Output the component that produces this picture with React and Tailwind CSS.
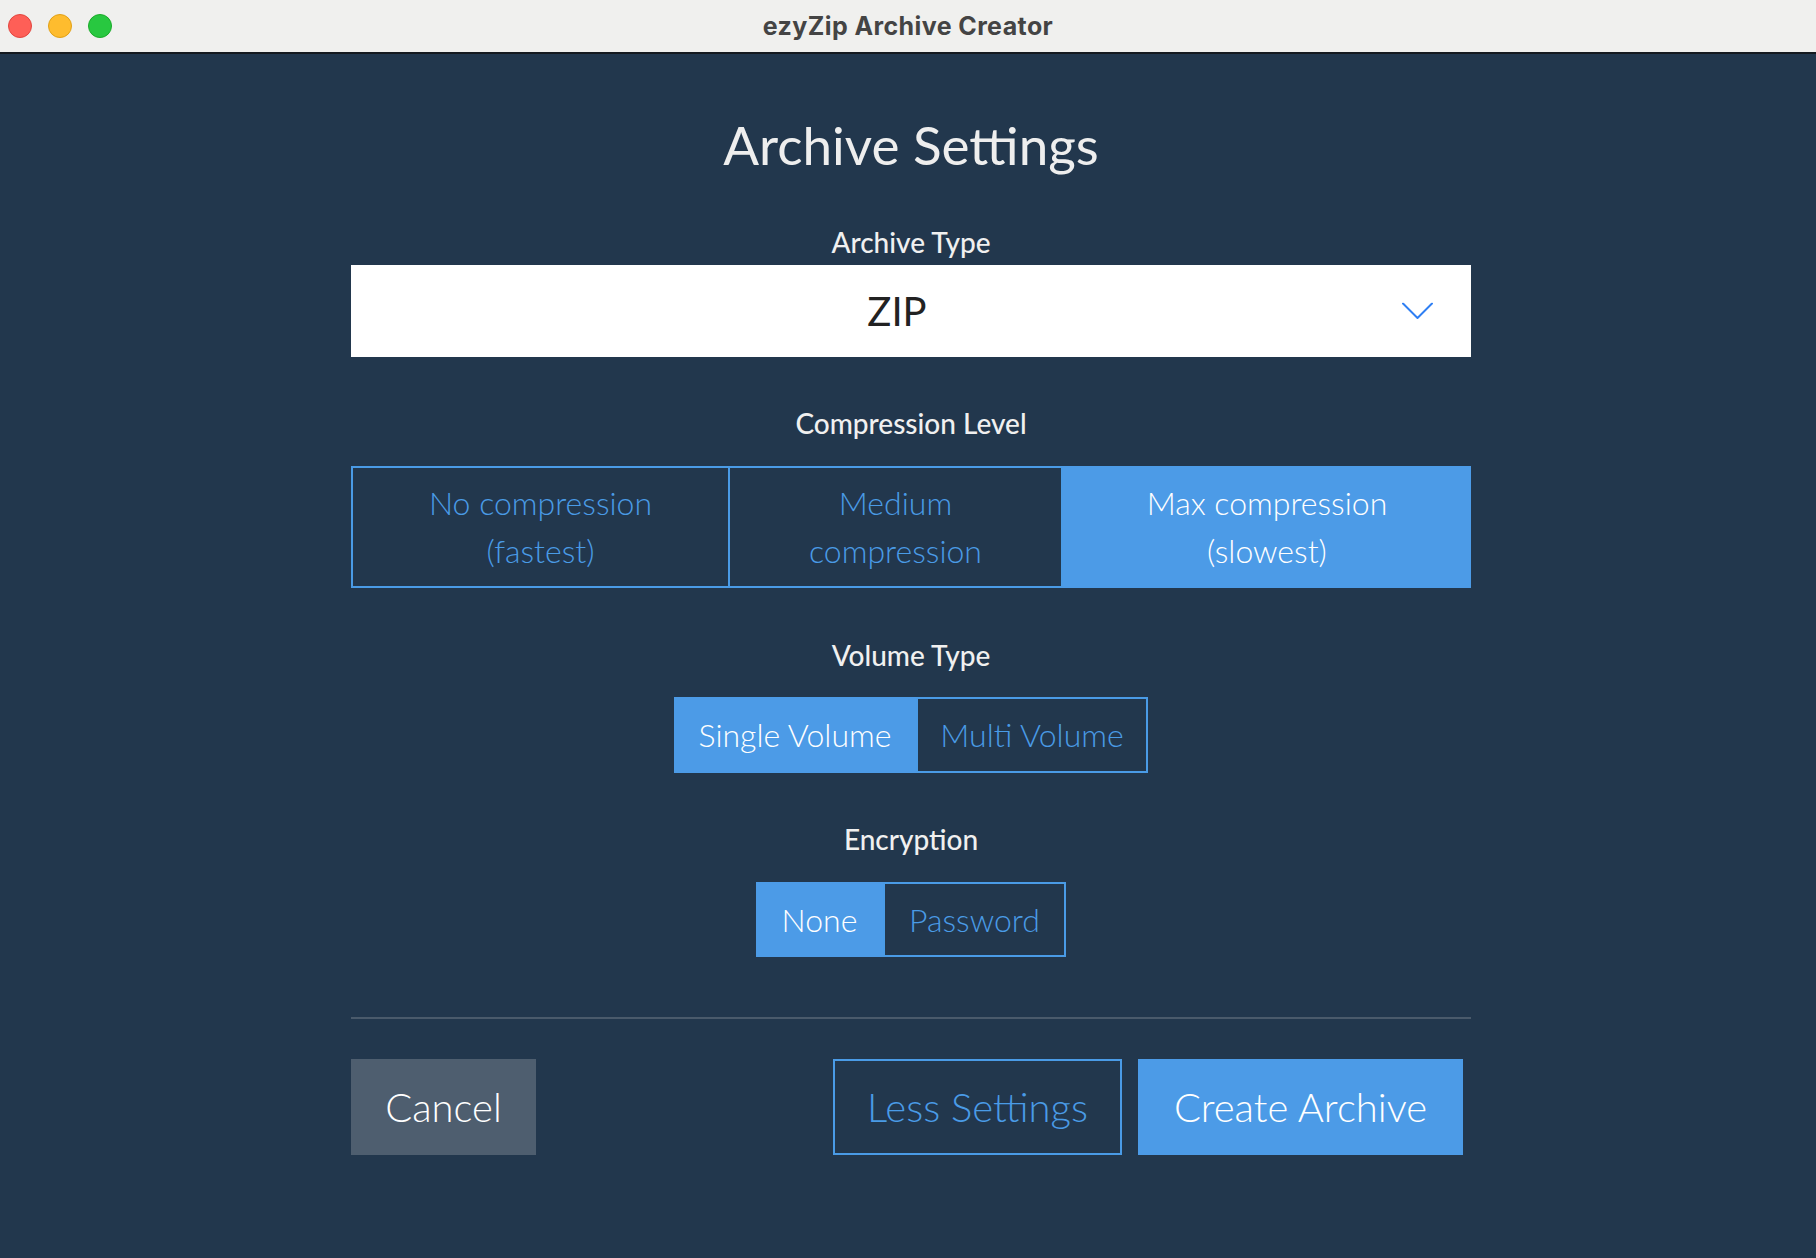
import React from "react";

function Label({ children, className = "" }) {
  return (
    <div className={`text-[28px] leading-[32px] text-[#f0f0f0] font-medium text-center ${className}`}>
      {children}
    </div>
  );
}

export default function App() {
  return (
    <div className="w-[1816px] h-[1258px] flex flex-col bg-[#22374d] font-['Lato',sans-serif] overflow-hidden">
      {/* Title bar */}
      <div className="h-[54px] shrink-0 bg-[#f0f0ee] border-b-2 border-[#151a20] grid grid-cols-[1fr_auto_1fr] items-center">
        <div className="flex items-center gap-[16px] pl-[8px]">
          <span className="w-[24px] h-[24px] rounded-full bg-[#fe5f57] border border-[#e2463f]" />
          <span className="w-[24px] h-[24px] rounded-full bg-[#febc2e] border border-[#e1a116]" />
          <span className="w-[24px] h-[24px] rounded-full bg-[#28c840] border border-[#1aab29]" />
        </div>
        <div className="font-['Inter',sans-serif] font-bold text-[25px] tracking-[0.4px] text-[#444444] leading-none">
          ezyZip Archive Creator
        </div>
        <div />
      </div>

      {/* Main */}
      <div className="flex-1 pt-[59px]">
        <div className="ml-[351px] w-[1120px] flex flex-col items-stretch">
          <h1 className="text-[53px] leading-[64px] text-[#eeeeee] font-normal text-center">
            Archive Settings
          </h1>

          <Label className="mt-[49px]">Archive Type</Label>
          <div className="relative mt-[7px] h-[92px] bg-white flex items-center justify-center pr-[28px]">
            <span className="text-[40px] leading-[48px] text-[#222222] font-normal">ZIP</span>
            <svg
              className="absolute right-[38px] top-1/2 -translate-y-1/2"
              width="31"
              height="17"
              viewBox="0 0 31 17"
              fill="none"
            >
              <polyline points="1,1 15.5,15.5 30,1" stroke="#2f7ff3" strokeWidth="2" strokeLinecap="round" strokeLinejoin="round" />
            </svg>
          </div>

          <Label className="mt-[50px]">Compression Level</Label>
          <div className="mt-[27px] h-[122px] flex">
            <div className="w-[379px] border-2 border-[#4a9be6] flex items-center justify-center text-center text-[32px] leading-[48px] font-light text-[#4a9be6]">
              <span>No compression<br />(fastest)</span>
            </div>
            <div className="w-[333px] border-y-2 border-r-2 border-[#4a9be6] flex items-center justify-center text-center text-[32px] leading-[48px] font-light text-[#4a9be6]">
              <span>Medium<br />compression</span>
            </div>
            <div className="flex-1 bg-[#4c9be7] flex items-center justify-center text-center text-[32px] leading-[48px] font-light text-white">
              <span>Max compression<br />(slowest)</span>
            </div>
          </div>

          <Label className="mt-[51px]">Volume Type</Label>
          <div className="mt-[26px] flex justify-center">
            <div className="flex h-[76px]">
              <div className="w-[242px] bg-[#4c9be7] flex items-center justify-center text-[32px] font-light text-white">
                Single Volume
              </div>
              <div className="w-[232px] border-2 border-[#4a9be6] flex items-center justify-center text-[32px] font-light text-[#4a9be6]">
                Multi Volume
              </div>
            </div>
          </div>

          <Label className="mt-[50px]">Encryption</Label>
          <div className="mt-[27px] flex justify-center">
            <div className="flex h-[75px]">
              <div className="w-[127px] bg-[#4c9be7] flex items-center justify-center text-[32px] font-light text-white">
                None
              </div>
              <div className="w-[183px] border-2 border-[#4a9be6] flex items-center justify-center text-[32px] font-light text-[#4a9be6]">
                Password
              </div>
            </div>
          </div>

          <div className="mt-[60px] h-[2px] bg-[#4a5a6b]" />

          <div className="mt-[40px] flex justify-between pr-[8px]">
            <button className="w-[185px] h-[96px] bg-[#4e5e6f] text-white text-[40px] font-light flex items-center justify-center">
              Cancel
            </button>
            <div className="flex gap-[16px]">
              <button className="w-[289px] h-[96px] border-2 border-[#4a9be6] text-[#4a9be6] text-[40px] font-light flex items-center justify-center">
                Less Settings
              </button>
              <button className="w-[325px] h-[96px] bg-[#4c9be7] text-white text-[40px] font-light flex items-center justify-center">
                Create Archive
              </button>
            </div>
          </div>
        </div>
      </div>
    </div>
  );
}
